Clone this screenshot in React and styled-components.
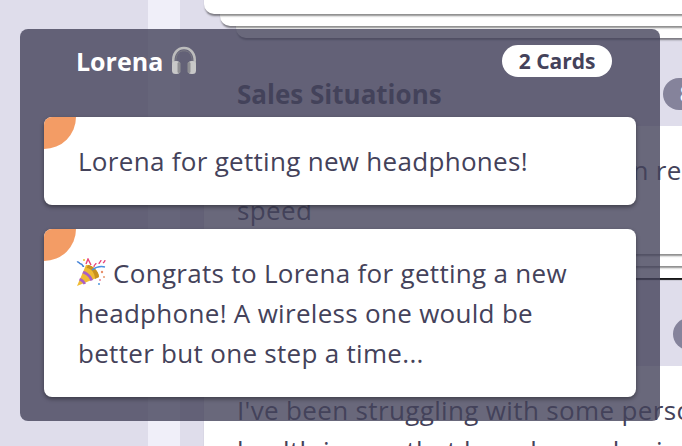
import React from 'react'
import styled, { createGlobalStyle } from 'styled-components'

const Global = createGlobalStyle`
html, body {
  margin: 0;
  padding: 0;
  width: 682px;
  height: 446px;
  overflow: hidden;
  background: #dfddeb;
}
* { box-sizing: border-box; }
`

function HeadphonesEmoji() {
  return (
    <svg width="28" height="30" viewBox="0 0 28 30">
      <path d="M3.5 18 C2 7 8 2 14 2 S26 7 24.5 18" fill="none" stroke="#bcbcbc" strokeWidth="2.6" />
      <path d="M5.8 15 C6 8 9 4.8 14 4.8 S22 8 22.2 15" fill="none" stroke="#828287" strokeWidth="0.8" />
      <rect x="2" y="15" width="8" height="13" rx="3.5" fill="#c8c8c8" />
      <rect x="18" y="15" width="8" height="13" rx="3.5" fill="#c8c8c8" />
      <rect x="7.5" y="16" width="3" height="11" rx="1.5" fill="#8f8f93" />
      <rect x="17.5" y="16" width="3" height="11" rx="1.5" fill="#8f8f93" />
    </svg>
  )
}

function PartyEmoji() {
  return (
    <svg width="30" height="30" viewBox="0 0 30 30">
      <path d="M1 28 L10 7 C15 6 23 13 23 19 Z" fill="#f0bb33" />
      <path d="M12 7 C16 7 23 13 23 19 L19 21 C19 15 15 10 10.5 10 Z" fill="#c9921e" />
      <path d="M7.5 13 C11 13.5 16 18 17 22 L14.5 23 C13.5 19.5 10 16 6.3 15.5 Z" fill="#a85fc6" />
      <path d="M4 20 C6.5 20.5 9 23 10 25.5 L7.5 26.5 C6.5 24.5 5 23 3 22.5 Z" fill="#a85fc6" />
      <path d="M16 12 C20 9 25 8 29 9" fill="none" stroke="#4a90e2" strokeWidth="1.5" />
      <path d="M1 4 C3 3 3 6 5 6 S6 9 8 8" fill="none" stroke="#3f7fd6" strokeWidth="1.4" />
      <path d="M10 6 L12 1 L15 7" fill="none" stroke="#e8457a" strokeWidth="1.4" />
      <path d="M18 9 C18 6 20 7 20 5 M23 6 C23 4 25 4 25 2 M27 5 C28 4 29 4 29 2" fill="none" stroke="#e8457a" strokeWidth="1.3" />
      <circle cx="8" cy="2" r="1" fill="#e8c02f" />
      <circle cx="26" cy="14" r="1.2" fill="#e88f6a" />
      <circle cx="28" cy="19" r="1.1" fill="#e8a07a" />
      <circle cx="24" cy="22" r="1.1" fill="#e88fa0" />
      <circle cx="23" cy="26" r="1.1" fill="#5aa0e0" />
    </svg>
  )
}

function Stack({ children, dark }) {
  return (
    <StackWrap>
      <Under $inset={32} $depth={24} $dark={dark} />
      <Under $inset={16} $depth={12} />
      <Paper>{children}</Paper>
    </StackWrap>
  )
}

export default function App() {
  return (
    <Page>
      <Global />
      <Sidebar />
      <Gutter />
      <Main>
        <TopStack>
          <Stack />
        </TopStack>
        <SectionHead>
          <SectionTitle>Sales Situations</SectionTitle>
          <CountPill>8 Cards</CountPill>
        </SectionHead>
        <Stack dark>
          <Body>
            Looking for advice on a closing in record
            <br />
            speed
          </Body>
        </Stack>
        <SectionHead>
          <CountPill>1 Card</CountPill>
        </SectionHead>
        <Stack>
          <Body>
            I've been struggling with some personal
            <br />
            health issues that have been slowing
          </Body>
        </Stack>
      </Main>

      <Panel>
        <PanelHead>
          <Name>
            Lorena <HeadphonesEmoji />
          </Name>
          <WhitePill>2 Cards</WhitePill>
        </PanelHead>
        <Note>
          <Corner />
          Lorena for getting new headphones!
        </Note>
        <Note>
          <Corner />
          <PartyEmoji /> Congrats to Lorena for getting a new
          <br />
          headphone! A wireless one would be
          <br />
          better but one step a time...
        </Note>
      </Panel>
    </Page>
  )
}

const Page = styled.div`
  position: relative;
  display: flex;
  width: 682px;
  height: 446px;
  overflow: hidden;
  background: #dfddeb;
  color: #44425a;
  font-family: "Open Sans", sans-serif;
`
const Sidebar = styled.div`
  flex: 0 0 148px;
`
const Gutter = styled.div`
  flex: 0 0 32px;
  background: #f0eff9;
`
const Main = styled.div`
  flex: 0 0 592px;
  padding-left: 24px;
`
const TopStack = styled.div`
  margin-top: -100px;
`
const StackWrap = styled.div`
  position: relative;
  width: 568px;
  padding-bottom: 24px;
`
const Under = styled.div`
  position: absolute;
  left: ${props => props.$inset}px;
  right: 0;
  bottom: ${props => 24 - props.$depth}px;
  height: 40px;
  background: #fff;
  border-radius: 10px;
  box-shadow: ${props => props.$dark
    ? '0 2px 1px rgba(0, 0, 0, 0.9)'
    : '0 3px 2px -1px rgba(0, 0, 0, 0.45)'};
`
const Paper = styled.div`
  position: relative;
  min-height: 114px;
  background: #fff;
  border-radius: 10px;
  box-shadow: 0 3px 2px -1px rgba(0, 0, 0, 0.45);
`
const SectionHead = styled.div`
  display: flex;
  align-items: center;
  width: 568px;
  height: 88px;
  padding: 24px 0 0 33px;
`
const SectionTitle = styled.h2`
  margin: 0;
  font-size: 26px;
  font-weight: 700;
`
const CountPill = styled.span`
  margin-left: auto;
  padding: 0 17px;
  height: 32px;
  line-height: 32px;
  border-radius: 16px;
  background: #85839b;
  color: #fff;
  font-size: 21px;
  font-weight: 600;
`
const Body = styled.p`
  margin: 0;
  padding: 24px 33px;
  font-size: 26px;
  letter-spacing: 0.35px;
  line-height: 40px;
  white-space: nowrap;
  overflow: hidden;
`
const Panel = styled.div`
  position: absolute;
  left: 20px;
  top: 29px;
  width: 640px;
  height: 392px;
  padding: 0 24px;
  display: flex;
  flex-direction: column;
  gap: 24px;
  border-radius: 8px;
  background: rgba(68, 66, 90, 0.8);
`
const PanelHead = styled.div`
  display: flex;
  align-items: center;
  justify-content: space-between;
  height: 64px;
  padding: 0 24px 0 32px;
`
const Name = styled.div`
  display: flex;
  align-items: center;
  gap: 7px;
  color: #fff;
  font-size: 25px;
  font-weight: 700;
`
const WhitePill = styled.span`
  padding: 0 16.5px;
  height: 32px;
  line-height: 32px;
  border-radius: 16px;
  background: #fff;
  color: #44425a;
  font-size: 21px;
  font-weight: 700;
`
const Note = styled.div`
  position: relative;
  padding: 24px 34px;
  background: #fff;
  border-radius: 8px;
  overflow: hidden;
  box-shadow: 0 2px 4px rgba(0, 0, 0, 0.4);
  font-size: 26px;
  letter-spacing: 0.3px;
  line-height: 40px;
  svg { vertical-align: -5px; margin-left: -2px; }
`
const Corner = styled.div`
  position: absolute;
  left: 0;
  top: 0;
  width: 32px;
  height: 32px;
  background: #f39c65;
  border-bottom-right-radius: 32px;
`
